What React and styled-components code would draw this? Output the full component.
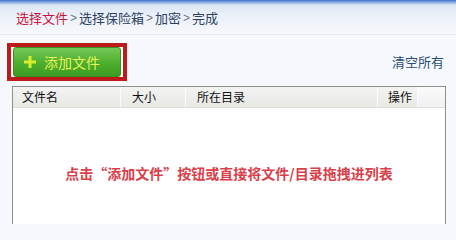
import React from 'react';
import styled, { createGlobalStyle } from 'styled-components';

const Global = createGlobalStyle`
  html, body { margin: 0; padding: 0; height: 224px; overflow: hidden; background: #f5f8fc; }
  body { font-family: "Noto Sans CJK SC", "Liberation Sans", sans-serif; }
`;

const Page = styled.div`
  width: 456px;
  height: 224px;
  overflow: hidden;
  display: flex;
  flex-direction: column;
  background: #f5f8fc;
`;

const Header = styled.div`
  height: 35px;
  flex: none;
  box-sizing: border-box;
  padding: 2px 0 0 16px;
  display: flex;
  align-items: center;
  gap: 2px;
  font-size: 13px;
  line-height: 20px;
  background: linear-gradient(#3f73cf 0px, #7fa3df 2px, #dce6f5 5px, #eaf0f9 14px, #f6f8fc 34px);
  border-bottom: 1px solid #e2e7ee;
`;

const Crumb = styled.span`
  color: ${p => (p.$active ? '#c8143a' : '#2d3f5e')};
`;

const Sep = styled.span`
  color: #6b7686;
  font-family: "Liberation Sans", sans-serif;
  font-size: 12px;
`;

const Toolbar = styled.div`
  flex: none;
  display: flex;
  align-items: flex-start;
  justify-content: space-between;
  padding: 8px 12px 0 7px;
  height: 47px;
  box-sizing: border-box;
`;

const Highlight = styled.div`
  border: 4px solid #bf1a1a;
  padding: 0 2px;
  background: #fff;
  width: 108px;
  height: 30px;
  display: flex;
  align-items: center;
`;

const AddButton = styled.div`
  flex: 1;
  height: 30px;
  box-sizing: border-box;
  border-radius: 3px;
  background: linear-gradient(#74c957, #4cae2d 55%, #3d9d22);
  border: 1px solid #3a8f24;
  display: flex;
  align-items: center;
  padding-left: 10px;
  gap: 8px;
  color: #e8f25a;
  font-size: 14px;
`;

const ClearLink = styled.span`
  color: #2c4d6d;
  font-size: 13px;
  margin-top: 9px;
`;

const Table = styled.div`
  margin: 4px 10px 0 12px;
  flex: 1;
  min-height: 0;
  border: 1px solid #8f8f8f;
  border-bottom: none;
  background: #fff;
  display: flex;
  flex-direction: column;
`;

const HeadRow = styled.div`
  height: 20px;
  flex: none;
  display: flex;
  border-bottom: 1px solid #dcdcdc;
  background: linear-gradient(#f3f3f1, #e8e8e5);
  font-size: 12px;
  color: #111;
`;

const HeadCell = styled.div`
  width: ${p => p.$w}px;
  box-sizing: border-box;
  padding-left: ${p => p.$pad}px;
  line-height: 20px;
  border-right: 1px solid #fcfcfc;
`;

const HeadRest = styled.div`
  flex: 1;
  background: linear-gradient(#fafafa, #f1f1f1);
`;

const Body = styled.div`
  flex: 1;
  display: flex;
  justify-content: center;
  padding-top: 55px;
`;

const Hint = styled.span`
  color: #d9404a;
  font-weight: bold;
  font-size: 14px;
  line-height: 20px;
  height: 20px;
`;

function Plus() {
  return (
    <svg width="12" height="12" viewBox="0 0 12 12">
      <rect x="4.5" y="0" width="3" height="12" fill="#d6ee2c" />
      <rect x="0" y="4.5" width="12" height="3" fill="#d6ee2c" />
    </svg>
  );
}

export default function App() {
  return (
    <Page>
      <Global />
      <Header>
        <Crumb $active>选择文件</Crumb>
        <Sep>&gt;</Sep>
        <Crumb>选择保险箱</Crumb>
        <Sep>&gt;</Sep>
        <Crumb>加密</Crumb>
        <Sep>&gt;</Sep>
        <Crumb>完成</Crumb>
      </Header>
      <Toolbar>
        <Highlight>
          <AddButton>
            <Plus />
            <span>添加文件</span>
          </AddButton>
        </Highlight>
        <ClearLink>清空所有</ClearLink>
      </Toolbar>
      <Table>
        <HeadRow>
          <HeadCell $w={108} $pad={9}>文件名</HeadCell>
          <HeadCell $w={65} $pad={11}>大小</HeadCell>
          <HeadCell $w={192} $pad={11}>所在目录</HeadCell>
          <HeadCell $w={40} $pad={10}>操作</HeadCell>
          <HeadRest />
        </HeadRow>
        <Body>
          <Hint>点击“添加文件”按钮或直接将文件/目录拖拽进列表</Hint>
        </Body>
      </Table>
    </Page>
  );
}
